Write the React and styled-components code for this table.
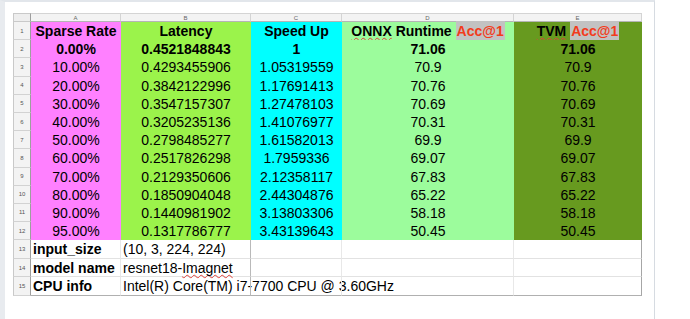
import React from 'react'
import styled, { createGlobalStyle } from 'styled-components'

const GlobalStyle = createGlobalStyle`
    html, body {
        margin: 0;
        padding: 0;
        background: #fff;
        font-family: "Liberation Sans", Arial, sans-serif;
    }
`

const columnColors = ['#ff80ff', '#9bf34b', '#00ffff', '#9cfc9c', '#679a1f']
const columnWidths = [18, 90, 130, 91, 172, 128]

const dataRows = [
    ['0.00%', '0.4521848843', '1', '71.06', '71.06'],
    ['10.00%', '0.4293455906', '1.05319559', '70.9', '70.9'],
    ['20.00%', '0.3842122996', '1.17691413', '70.76', '70.76'],
    ['30.00%', '0.3547157307', '1.27478103', '70.69', '70.69'],
    ['40.00%', '0.3205235136', '1.41076977', '70.31', '70.31'],
    ['50.00%', '0.2798485277', '1.61582013', '69.9', '69.9'],
    ['60.00%', '0.2517826298', '1.7959336', '69.07', '69.07'],
    ['70.00%', '0.2129350606', '2.12358117', '67.83', '67.83'],
    ['80.00%', '0.1850904048', '2.44304876', '65.22', '65.22'],
    ['90.00%', '0.1440981902', '3.13803306', '58.18', '58.18'],
    ['95.00%', '0.1317786777', '3.43139643', '50.45', '50.45'],
]

export default function App() {
    const headers = [
        'Sparse Rate',
        'Latency',
        'Speed Up',
        <span><Misspelled>ONNX</Misspelled> Runtime <Highlight>Acc@1</Highlight></span>,
        <span><Misspelled>TVM</Misspelled> <Highlight>Acc@1</Highlight></span>,
    ]

    const infoRows = [
        { label: 'input_size', value: '(10, 3, 224, 224)' },
        { label: 'model name', value: <span>resnet18-<Misspelled>Imagnet</Misspelled></span> },
        { label: 'CPU info', value: 'Intel(R) Core(TM) i7-7700 CPU @ 3.60GHz' },
    ]

    return (
        <>
            <GlobalStyle />
            <Frame>
                <Sheet>
                    <Corner />
                    {['A', 'B', 'C', 'D', 'E'].map(letter => (
                        <ColumnHead key={letter}>{letter}</ColumnHead>
                    ))}

                    <RowNumber>1</RowNumber>
                    {headers.map((header, i) => (
                        <Cell key={i} $bg={columnColors[i]} $bold>{header}</Cell>
                    ))}

                    {dataRows.map((row, r) => (
                        <React.Fragment key={r}>
                            <RowNumber>{r + 2}</RowNumber>
                            {row.map((value, i) => (
                                <Cell key={i} $bg={columnColors[i]} $bold={r === 0}>{value}</Cell>
                            ))}
                        </React.Fragment>
                    ))}

                    {infoRows.map((row, r) => (
                        <React.Fragment key={row.label}>
                            <RowNumber>{r + 13}</RowNumber>
                            <InfoCell $bold $last={r === 2}>{row.label}</InfoCell>
                            <InfoCell $last={r === 2}>{row.value}</InfoCell>
                            <InfoCell $last={r === 2} $pageBreak />
                            <InfoCell $last={r === 2} />
                            <InfoCell $last={r === 2} $edge />
                        </React.Fragment>
                    ))}
                </Sheet>
                <PostText>
                    Latency drops as sparsity increases, and TVM matches ONNX accuracy.
                </PostText>
            </Frame>
        </>
    )
}

const Frame = styled.div`
    box-sizing: border-box;
    width: 655px;
    height: 319px;
    overflow: hidden;
    border-left: 5px solid #e8ebef;
    border-top: 2px solid #e2e6eb;
    border-right: 1px solid #d6dbe1;
    padding-top: 11px;
`

const Sheet = styled.div`
    display: grid;
    grid-template-columns: ${columnWidths.map(w => w + 'px').join(' ')};
    grid-template-rows: 9px repeat(12, 18.2px) repeat(3, 18.6px);
    margin-left: 8px;
    width: max-content;
    font-size: 14px;
    color: #000;
`

const Corner = styled.div`
    background: #eeeeee;
    border: 1px solid #c9c9c9;
    border-right-color: #9e9e9e;
    box-sizing: border-box;
`

const ColumnHead = styled.div`
    display: flex;
    align-items: center;
    justify-content: center;
    background: #f3f3f3;
    border-top: 1px solid #d4d4d4;
    border-right: 1px solid #d4d4d4;
    border-bottom: 1px solid #b5b5b5;
    box-sizing: border-box;
    font-size: 6px;
    color: #666;
`

const RowNumber = styled.div`
    display: flex;
    align-items: center;
    justify-content: center;
    background: #f3f3f3;
    border-left: 1px solid #c9c9c9;
    border-right: 1px solid #9e9e9e;
    border-bottom: 1px solid #d2d2d2;
    box-sizing: border-box;
    font-size: 6px;
    color: #555;
`

const Cell = styled.div`
    display: flex;
    align-items: center;
    justify-content: center;
    background: ${p => p.$bg};
    font-weight: ${p => (p.$bold ? 700 : 400)};
    white-space: nowrap;
    line-height: 1;
`

const InfoCell = styled.div`
    display: flex;
    align-items: center;
    padding-left: 2px;
    box-sizing: border-box;
    white-space: nowrap;
    overflow: visible;
    font-weight: ${p => (p.$bold ? 700 : 400)};
    border-bottom: 1px solid ${p => (p.$last ? '#b0b0b0' : '#e2e2e2')};
    border-right: 1px solid ${p => (p.$edge ? '#a6a6a6' : '#e8e8e8')};
    border-left: ${p => (p.$pageBreak ? '1px solid #b9b9b9' : 'none')};
    margin-left: ${p => (p.$pageBreak ? '-1px' : '0')};
`

const Misspelled = styled.span`
    text-decoration: underline wavy #e0403a;
    text-decoration-thickness: 1px;
    text-decoration-skip-ink: none;
    text-underline-offset: 1px;
`

const Highlight = styled.span`
    color: #f23b1c;
    background: #c2c2c2;
    padding: 2px 1px;
`

const PostText = styled.p`
    margin: 19px 0 0 10px;
    font-size: 15px;
    line-height: 20px;
    color: #222;
    white-space: nowrap;
`
